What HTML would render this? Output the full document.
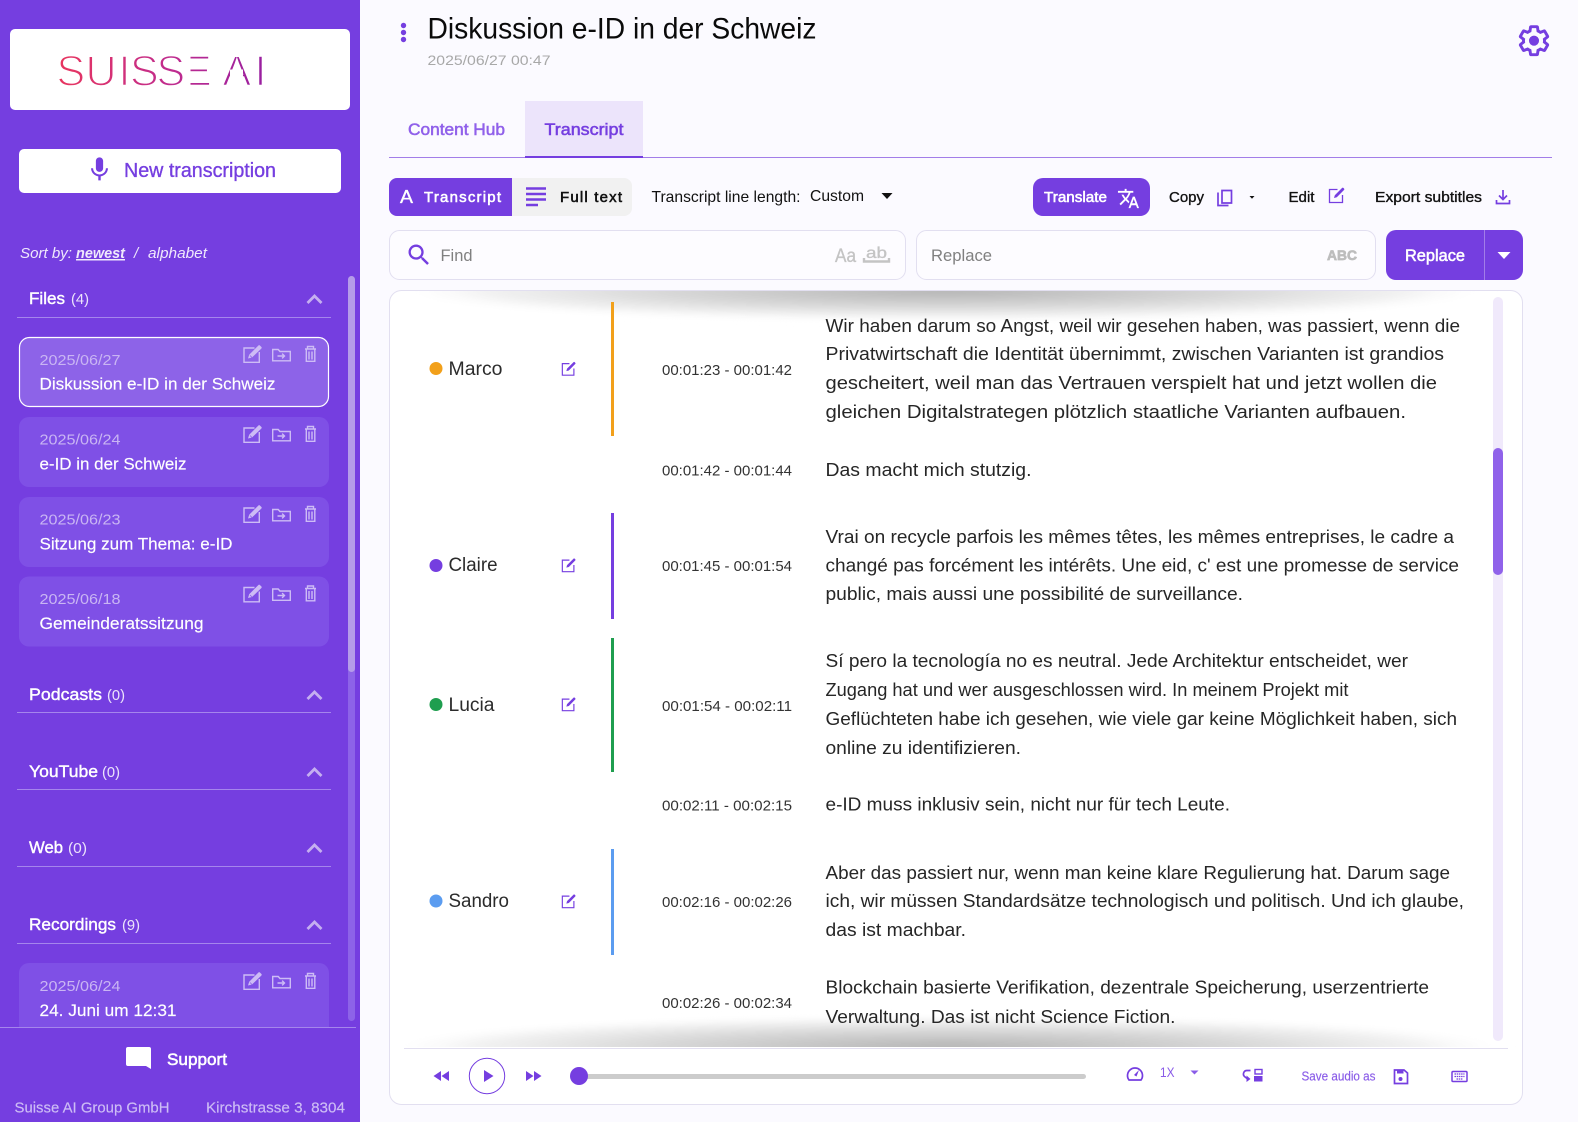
<!DOCTYPE html>
<html lang="en"><head><meta charset="utf-8"><title>Suisse AI – Transcript</title>
<style>
html,body{margin:0;padding:0;background:#fbfaff;overflow:hidden}
svg{display:block}
text{font-family:"Liberation Sans",sans-serif;white-space:pre}
.m{stroke-width:.35px;paint-order:stroke}
.w{fill:#fff}.wm{fill:#fff;stroke:#fff}
.p{fill:#753ee0}.pm{fill:#753ee0;stroke:#753ee0}
.k{fill:#111}.km{fill:#111;stroke:#111}
.h{stroke-width:.55px;paint-order:stroke}
.b{font-size:18px;fill:#262626}
.t{font-size:15px;fill:#333}
.n{font-size:19px;fill:#2b2b2b}
.sh{font-size:17px;fill:#fff;stroke:#fff;stroke-width:.4px}
.sc{font-size:15px;fill:#efe8fc}
.d{font-size:14.5px;fill:#c9b5f3}
.c{font-size:17px;fill:#fff;stroke:#fff;stroke-width:.15px}
.i{fill:none;stroke:#cdbcf5;stroke-width:1.4}
.ip{fill:none;stroke:#753ee0;stroke-width:1.7}
.ie{fill:none;stroke:#753ee0;stroke-width:1.3}
.ch{fill:none;stroke:#c5aff0;stroke-width:2.8}
</style></head>
<body>
<svg xmlns="http://www.w3.org/2000/svg" width="1578" height="1122" viewBox="0 0 1578 1122">
<defs>
<linearGradient id="lg" gradientUnits="userSpaceOnUse" x1="59" x2="262" y1="0" y2="0"><stop offset="0" stop-color="#e8355f"/><stop offset=".55" stop-color="#c02c8e"/><stop offset="1" stop-color="#9a1f9f"/></linearGradient>
<radialGradient id="sg"><stop offset="0" stop-color="#b4b4b4"/><stop offset=".5" stop-color="#d6d6d6"/><stop offset=".85" stop-color="#f3f3f3"/><stop offset="1" stop-color="#fff" stop-opacity="0"/></radialGradient>
<filter id="sb" x="-5%" y="-40%" width="110%" height="180%"><feGaussianBlur stdDeviation="3.500"/></filter>
<clipPath id="ct"><rect x="390" y="291" width="1132" height="40"/></clipPath>
<clipPath id="cb"><rect x="390" y="1000" width="1132" height="47"/></clipPath>
<symbol id="ci" viewBox="0 0 76 18" overflow="visible">
<path class="i" d="M11.500 3H1v14.300h15.300V7"/><path d="M5 13.500l1.200-3.800L15.300.6a1.200 1.200 0 0 1 1.700 0l1.300 1.300a1.200 1.200 0 0 1 0 1.700L9 12.500z" fill="#cdbcf5"/><path d="M7 10.500l2 2" stroke="#8d63e8" stroke-width=".8"/>
<path class="i" d="M29.700 15.800V4.500h5.500l1.800 2h10.300v9.300z"/><path class="i" d="M34.500 11h7m-2.400-2.400l2.400 2.400-2.400 2.400" stroke-width="1.100"/>
<path class="i" d="M62 4h11M64.500 3.500V1.500h6v2M63.300 4.500v11.800h8.500V4.500M66 6.500v8M69 6.500v8"/>
</symbol>
<symbol id="ed" viewBox="0 0 18 18" overflow="visible">
<path class="ie" d="M9.500 3.500H1.500v13h13V9"/><path d="M6 12l.8-2.800L14 2a1 1 0 0 1 1.500 0l.5.500a1 1 0 0 1 0 1.500L8.800 11.200z" fill="#753ee0"/>
</symbol>
</defs>

<rect width="1578" height="1122" fill="#fbfaff"/>

<!-- Sidebar -->
<rect width="360" height="1122" fill="#753ee0"/>
<rect x="10" y="29" width="340" height="81" rx="5" fill="#fff"/>
<text y="85.500" font-size="43" fill="url(#lg)" stroke="#fff" stroke-width="1.500" paint-order="fill stroke"><tspan x="56.500">S</tspan><tspan x="85.500">U</tspan><tspan x="118.500">I</tspan><tspan x="130">S</tspan><tspan x="156.500">S</tspan><tspan x="183">E</tspan><tspan x="222.500">A</tspan><tspan x="254.500">I</tspan></text>
<rect x="183" y="54" width="7.500" height="33" fill="#fff"/>
<rect x="230" y="69.500" width="13" height="9" fill="#fff"/>
<rect x="19" y="149" width="322" height="44" rx="5" fill="#fff"/>
<svg x="85" y="155" width="29" height="29" viewBox="0 0 24 24"><path fill="#753ee0" d="M12 14c1.660 0 2.990-1.340 2.990-3L15 5c0-1.660-1.340-3-3-3S9 3.340 9 5v6c0 1.660 1.340 3 3 3zm5.300-3c0 3-2.540 5.100-5.300 5.100S6.700 14 6.700 11H5c0 3.410 2.720 6.230 6 6.720V21h2v-3.280c3.280-.48 6-3.300 6-6.720h-1.700z"/></svg>
<text x="124" y="177" font-size="20" class="pm m" textLength="152" lengthAdjust="spacingAndGlyphs">New transcription</text>
<text x="20" y="258" class="sc" font-style="italic" textLength="52" lengthAdjust="spacingAndGlyphs">Sort by:</text>
<text x="76" y="258" class="sc" font-style="italic" font-weight="700" textLength="49" lengthAdjust="spacingAndGlyphs" text-decoration="underline">newest</text>
<text x="134" y="258" class="sc" font-style="italic">/</text>
<text x="148" y="258" class="sc" font-style="italic" textLength="59" lengthAdjust="spacingAndGlyphs">alphabet</text>

<rect x="348" y="276" width="7" height="745" rx="3.500" fill="#8d63e8"/>
<rect x="348" y="276" width="7" height="396" rx="3.500" fill="#b59ce9"/>

<text x="29" y="304" class="sh" textLength="36" lengthAdjust="spacingAndGlyphs">Files</text><text x="71" y="304" font-size="15" fill="#ece4fb" textLength="18" lengthAdjust="spacingAndGlyphs">(4)</text>
<path d="M307.500 303l7-7 7 7" class="ch"/>
<rect x="17" y="317" width="314" height="1" fill="#a585ec"/>

<rect x="19.500" y="337.500" width="309" height="69" rx="10" fill="#8d63e8" stroke="#fff" stroke-width="1.200"/>
<text x="39.500" y="365" class="d" textLength="81" lengthAdjust="spacingAndGlyphs">2025/06/27</text>
<text x="39.500" y="389.500" class="c" textLength="236" lengthAdjust="spacingAndGlyphs">Diskussion e-ID in der Schweiz</text>
<use href="#ci" x="243" y="345" width="76" height="18"/>

<rect x="19" y="417" width="310" height="70" rx="10" fill="#7f50e6"/>
<text x="39.500" y="444.500" class="d" textLength="81" lengthAdjust="spacingAndGlyphs">2025/06/24</text>
<text x="39.500" y="469.500" class="c" textLength="147" lengthAdjust="spacingAndGlyphs">e-ID in der Schweiz</text>
<use href="#ci" x="243" y="425" width="76" height="18"/>

<rect x="19" y="497" width="310" height="70" rx="10" fill="#7f50e6"/>
<text x="39.500" y="524.500" class="d" textLength="81" lengthAdjust="spacingAndGlyphs">2025/06/23</text>
<text x="39.500" y="549.500" class="c" textLength="193" lengthAdjust="spacingAndGlyphs">Sitzung zum Thema: e-ID</text>
<use href="#ci" x="243" y="505" width="76" height="18"/>

<rect x="19" y="576.500" width="310" height="70" rx="10" fill="#7f50e6"/>
<text x="39.500" y="604" class="d" textLength="81" lengthAdjust="spacingAndGlyphs">2025/06/18</text>
<text x="39.500" y="629" class="c" textLength="164" lengthAdjust="spacingAndGlyphs">Gemeinderatssitzung</text>
<use href="#ci" x="243" y="584.500" width="76" height="18"/>

<text x="29" y="700" class="sh" textLength="73" lengthAdjust="spacingAndGlyphs">Podcasts</text><text x="107" y="700" font-size="15" fill="#ece4fb" textLength="18" lengthAdjust="spacingAndGlyphs">(0)</text>
<path d="M307.500 699l7-7 7 7" class="ch"/>
<rect x="17" y="712" width="314" height="1" fill="#a585ec"/>

<text x="29" y="777" class="sh" textLength="69" lengthAdjust="spacingAndGlyphs">YouTube</text><text x="102" y="777" font-size="15" fill="#ece4fb" textLength="18" lengthAdjust="spacingAndGlyphs">(0)</text>
<path d="M307.500 776l7-7 7 7" class="ch"/>
<rect x="17" y="789" width="314" height="1" fill="#a585ec"/>

<text x="29" y="853" class="sh" textLength="34" lengthAdjust="spacingAndGlyphs">Web</text><text x="68" y="853" font-size="15" fill="#ece4fb" textLength="19" lengthAdjust="spacingAndGlyphs">(0)</text>
<path d="M307.500 852l7-7 7 7" class="ch"/>
<rect x="17" y="866" width="314" height="1" fill="#a585ec"/>

<text x="29" y="930" class="sh" textLength="87" lengthAdjust="spacingAndGlyphs">Recordings</text><text x="122" y="930" font-size="15" fill="#ece4fb" textLength="18" lengthAdjust="spacingAndGlyphs">(9)</text>
<path d="M307.500 929l7-7 7 7" class="ch"/>
<rect x="17" y="943" width="314" height="1" fill="#a585ec"/>

<rect x="19" y="963" width="310" height="80" rx="10" fill="#7f50e6"/>
<text x="39.500" y="991" class="d" textLength="81" lengthAdjust="spacingAndGlyphs">2025/06/24</text>
<text x="39.500" y="1016" class="c" textLength="137" lengthAdjust="spacingAndGlyphs">24. Juni um 12:31</text>
<use href="#ci" x="243" y="972" width="76" height="18"/>

<rect x="0" y="1027" width="360" height="95" fill="#753ee0"/>
<rect x="0" y="1027" width="356" height="1" fill="#a585ec"/>
<path d="M128 1047h21a2 2 0 0 1 2 2v20l-5-3h-18a2 2 0 0 1-2-2v-15a2 2 0 0 1 2-2z" fill="#fff"/>
<text x="167" y="1065" font-size="17" class="wm h" textLength="60" lengthAdjust="spacingAndGlyphs">Support</text>
<text x="14.500" y="1112.500" font-size="14.500" fill="#cdbcf5" stroke="#cdbcf5" stroke-width=".15" textLength="155" lengthAdjust="spacingAndGlyphs">Suisse AI Group GmbH</text>
<text x="206" y="1112.500" font-size="14.500" fill="#cdbcf5" stroke="#cdbcf5" stroke-width=".15" textLength="139" lengthAdjust="spacingAndGlyphs">Kirchstrasse 3, 8304</text>

<!-- Header -->
<circle cx="403.500" cy="25.500" r="2.700" fill="#753ee0"/><circle cx="403.500" cy="32.500" r="2.700" fill="#753ee0"/><circle cx="403.500" cy="39.500" r="2.700" fill="#753ee0"/>
<text x="427.500" y="38.500" font-size="30" fill="#0a0a0a" textLength="389" lengthAdjust="spacingAndGlyphs">Diskussion e-ID in der Schweiz</text>
<text x="427.500" y="65" font-size="14" fill="#a8a8a8" textLength="123" lengthAdjust="spacingAndGlyphs">2025/06/27 00:47</text>
<g transform="translate(1517.200,23.900) scale(1.400)"><path fill="none" stroke="#753ee0" stroke-width="2.100" stroke-linejoin="miter" d="M19.430 12.980c.04-.32.07-.64.07-.98s-.03-.66-.07-.98l2.110-1.650c.19-.15.24-.42.120-.64l-2-3.460c-.12-.22-.39-.3-.61-.22l-2.490 1c-.52-.4-1.080-.73-1.690-.98l-.38-2.650C14.460 2.180 14.250 2 14 2h-4c-.25 0-.46.18-.49.42l-.38 2.650c-.61.25-1.170.59-1.690.98l-2.490-1c-.23-.09-.49 0-.61.22l-2 3.460c-.13.22-.07.49.12.64l2.110 1.650c-.04.32-.07.65-.07.98s.03.66.07.98l-2.110 1.650c-.19.15-.24.42-.12.64l2 3.460c.12.22.39.3.61.22l2.490-1c.52.4 1.080.73 1.690.98l.38 2.650c.03.24.24.42.49.42h4c.25 0 .46-.18.49-.42l.38-2.650c.61-.25 1.170-.59 1.690-.98l2.490 1c.23.09.49 0 .61-.22l2-3.460c.12-.22.07-.49-.12-.64l-2.110-1.650z"/><circle cx="12" cy="12" r="3.600" fill="#753ee0"/></g>

<!-- Tabs -->
<rect x="525" y="101" width="118" height="56" fill="#ece4fb"/>
<rect x="389" y="157" width="1163" height="1" fill="#a27de8"/>
<rect x="525" y="156" width="118" height="2" fill="#753ee0"/>
<text x="408" y="135" font-size="17" fill="#9060ea" stroke="#9060ea" class="h" textLength="97" lengthAdjust="spacingAndGlyphs">Content Hub</text>
<text x="544.500" y="135" font-size="17" class="pm h" textLength="79" lengthAdjust="spacingAndGlyphs">Transcript</text>

<!-- Toolbar -->
<path d="M397 178h115v38H397a8 8 0 0 1-8-8v-22a8 8 0 0 1 8-8z" fill="#753ee0"/>
<path d="M512 178h112a8 8 0 0 1 8 8v22a8 8 0 0 1-8 8H512z" fill="#f1f1f1"/>
<text x="400" y="203" font-size="18" class="wm m" textLength="13" lengthAdjust="spacingAndGlyphs">A</text>
<text x="424" y="202" font-size="15" class="wm h" letter-spacing="1" textLength="78" lengthAdjust="spacing">Transcript</text>
<path d="M526 188.500h20M526 194h20M526 199.500h20M526 205h12" stroke="#753ee0" stroke-width="2.400" fill="none"/>
<text x="560" y="202" font-size="15" class="km h" textLength="62" lengthAdjust="spacing">Full text</text>
<text x="651.500" y="202" font-size="16" fill="#111" textLength="149" lengthAdjust="spacingAndGlyphs">Transcript line length:</text>
<text x="810" y="201" font-size="16" fill="#111" textLength="54" lengthAdjust="spacingAndGlyphs">Custom</text>
<path d="M881.500 193h11l-5.500 6z" fill="#111"/>

<rect x="1033" y="178" width="117" height="38" rx="10" fill="#753ee0"/>
<text x="1044" y="202" font-size="15" class="wm h" textLength="63" lengthAdjust="spacingAndGlyphs">Translate</text>
<svg x="1117" y="187" width="23" height="23" viewBox="0 0 24 24"><path fill="#fff" d="M12.870 15.070l-2.540-2.510.03-.03c1.740-1.940 2.980-4.170 3.710-6.530H17V4h-7V2H8v2H1v1.990h11.170C11.500 7.920 10.440 9.750 9 11.350 8.070 10.320 7.300 9.190 6.690 8h-2c.73 1.630 1.730 3.170 2.980 4.560l-5.090 5.020L4 19l5-5 3.110 3.110.76-2.040zM18.500 10h-2L12 22h2l1.120-3h4.750L21 22h2l-4.500-12zm-2.620 7l1.620-4.330L19.120 17h-3.240z"/></svg>
<text x="1169" y="202" font-size="15" class="km m" textLength="35" lengthAdjust="spacingAndGlyphs">Copy</text>
<path class="ip" d="M1222 190.500h9.500v12.500H1222zM1218 192.500v13h10.500"/>
<path d="M1249.500 196h5l-2.500 2.800z" fill="#111"/>
<text x="1288.500" y="202" font-size="15" class="km m" textLength="26" lengthAdjust="spacingAndGlyphs">Edit</text>
<use href="#ed" x="1328" y="186" width="18" height="18"/>
<text x="1375" y="202" font-size="15" class="km m" textLength="107" lengthAdjust="spacingAndGlyphs">Export subtitles</text>
<path class="ip" d="M1503 190v9.500m-4-4l4 4 4-4M1496.500 200v3.500h13V200"/>

<!-- Find / replace -->
<rect x="389.500" y="230.500" width="516" height="49" rx="10" fill="#fdfcff" stroke="#e2dff0"/>
<svg x="405" y="241" width="28" height="28" viewBox="0 0 24 24"><path fill="#753ee0" d="M15.500 14h-.79l-.28-.27C15.410 12.590 16 11.110 16 9.500 16 5.910 13.090 3 9.500 3S3 5.910 3 9.500 5.910 16 9.500 16c1.610 0 3.090-.59 4.230-1.570l.27.28v.79l5 4.990L20.490 19l-4.990-5zm-6 0C7.010 14 5 11.990 5 9.500S7.010 5 9.500 5 14 7.010 14 9.500 11.990 14 9.500 14z"/></svg>
<text x="440.500" y="261" font-size="17" fill="#808080" textLength="32" lengthAdjust="spacingAndGlyphs">Find</text>
<text x="835" y="262" font-size="19" fill="#c4c4c4" stroke="#c4c4c4" class="m" textLength="21" lengthAdjust="spacingAndGlyphs">Aa</text>
<text x="866" y="258" font-size="16" fill="#c4c4c4" stroke="#c4c4c4" class="m" textLength="21" lengthAdjust="spacingAndGlyphs">ab</text>
<path d="M864 258v3.500h25V258" fill="none" stroke="#c4c4c4" stroke-width="2.400"/>

<rect x="916.500" y="230.500" width="459" height="49" rx="10" fill="#fdfcff" stroke="#e2dff0"/>
<text x="931" y="261" font-size="17" fill="#808080" textLength="61" lengthAdjust="spacingAndGlyphs">Replace</text>
<text x="1327" y="260" font-size="14" font-weight="700" fill="#bdbdbd" stroke="#bdbdbd" stroke-width=".7" textLength="30" lengthAdjust="spacingAndGlyphs">ABC</text>
<rect x="1386" y="230" width="137" height="50" rx="10" fill="#753ee0"/>
<rect x="1484" y="230" width="1" height="50" fill="#a27de8"/>
<text x="1405" y="261" font-size="17" class="wm h" textLength="60" lengthAdjust="spacingAndGlyphs">Replace</text>
<path d="M1497.500 252h13l-6.500 7z" fill="#fff"/>

<!-- Transcript card -->
<rect x="389.500" y="290.500" width="1133" height="814" rx="12" fill="#fff" stroke="#e2dff0"/>
<g clip-path="url(#ct)"><ellipse cx="945" cy="291" rx="550" ry="30" fill="url(#sg)" filter="url(#sb)"/></g>
<g clip-path="url(#cb)"><ellipse cx="948" cy="1047" rx="565" ry="31" fill="url(#sg)" filter="url(#sb)"/></g>
<rect x="1493" y="297" width="10" height="744" rx="5" fill="#f0e9fb"/>
<rect x="1493" y="448" width="10" height="127" rx="5" fill="#9062ea"/>

<!-- Marco -->
<circle cx="436" cy="368.500" r="6.500" fill="#f2a01a"/>
<text x="448.500" y="375" class="n" textLength="54" lengthAdjust="spacingAndGlyphs">Marco</text>
<use href="#ed" x="561" y="360.500" width="16" height="16"/>
<rect x="611" y="302" width="3" height="134" fill="#f2a01a"/>
<text x="662" y="375" class="t" textLength="130" lengthAdjust="spacingAndGlyphs">00:01:23 - 00:01:42</text>
<text x="825.500" y="332" class="b" textLength="634.500" lengthAdjust="spacingAndGlyphs">Wir haben darum so Angst, weil wir gesehen haben, was passiert, wenn die</text>
<text x="825.500" y="360" class="b" textLength="618.500" lengthAdjust="spacingAndGlyphs">Privatwirtschaft die Identität übernimmt, zwischen Varianten ist grandios</text>
<text x="825.500" y="389" class="b" textLength="611.500" lengthAdjust="spacingAndGlyphs">gescheitert, weil man das Vertrauen verspielt hat und jetzt wollen die</text>
<text x="825.500" y="418" class="b" textLength="580.500" lengthAdjust="spacingAndGlyphs">gleichen Digitalstrategen plötzlich staatliche Varianten aufbauen.</text>
<text x="662" y="475.500" class="t" textLength="130" lengthAdjust="spacingAndGlyphs">00:01:42 - 00:01:44</text>
<text x="825.500" y="476" class="b" textLength="206" lengthAdjust="spacingAndGlyphs">Das macht mich stutzig.</text>

<!-- Claire -->
<circle cx="436" cy="565.500" r="6.500" fill="#753ee0"/>
<text x="448.500" y="571" class="n" textLength="49" lengthAdjust="spacingAndGlyphs">Claire</text>
<use href="#ed" x="561" y="557" width="16" height="16"/>
<rect x="611" y="513" width="3" height="106" fill="#753ee0"/>
<text x="662" y="571" class="t" textLength="130" lengthAdjust="spacingAndGlyphs">00:01:45 - 00:01:54</text>
<text x="825.500" y="543" class="b" textLength="628.500" lengthAdjust="spacingAndGlyphs">Vrai on recycle parfois les mêmes têtes, les mêmes entreprises, le cadre a</text>
<text x="825.500" y="571.500" class="b" textLength="633.500" lengthAdjust="spacingAndGlyphs">changé pas forcément les intérêts. Une eid, c' est une promesse de service</text>
<text x="825.500" y="600" class="b" textLength="417.500" lengthAdjust="spacingAndGlyphs">public, mais aussi une possibilité de surveillance.</text>

<!-- Lucia -->
<circle cx="436" cy="704.500" r="6.500" fill="#1f9e4f"/>
<text x="448.500" y="711" class="n" textLength="46" lengthAdjust="spacingAndGlyphs">Lucia</text>
<use href="#ed" x="561" y="696" width="16" height="16"/>
<rect x="611" y="638" width="3" height="134" fill="#1f9e4f"/>
<text x="662" y="711" class="t" textLength="130" lengthAdjust="spacingAndGlyphs">00:01:54 - 00:02:11</text>
<text x="825.500" y="667" class="b" textLength="582.500" lengthAdjust="spacingAndGlyphs">Sí pero la tecnología no es neutral. Jede Architektur entscheidet, wer</text>
<text x="825.500" y="696" class="b" textLength="523" lengthAdjust="spacingAndGlyphs">Zugang hat und wer ausgeschlossen wird. In meinem Projekt mit</text>
<text x="825.500" y="725" class="b" textLength="631.500" lengthAdjust="spacingAndGlyphs">Geflüchteten habe ich gesehen, wie viele gar keine Möglichkeit haben, sich</text>
<text x="825.500" y="754" class="b" textLength="195.500" lengthAdjust="spacingAndGlyphs">online zu identifizieren.</text>
<text x="662" y="810.500" class="t" textLength="130" lengthAdjust="spacingAndGlyphs">00:02:11 - 00:02:15</text>
<text x="825.500" y="810.500" class="b" textLength="404.500" lengthAdjust="spacingAndGlyphs">e-ID muss inklusiv sein, nicht nur für tech Leute.</text>

<!-- Sandro -->
<circle cx="436" cy="901" r="6.500" fill="#5b9cf0"/>
<text x="448.500" y="907" class="n" textLength="60.500" lengthAdjust="spacingAndGlyphs">Sandro</text>
<use href="#ed" x="561" y="893" width="16" height="16"/>
<rect x="611" y="849" width="3" height="106" fill="#5b9cf0"/>
<text x="662" y="907" class="t" textLength="130" lengthAdjust="spacingAndGlyphs">00:02:16 - 00:02:26</text>
<text x="825.500" y="879" class="b" textLength="624.500" lengthAdjust="spacingAndGlyphs">Aber das passiert nur, wenn man keine klare Regulierung hat. Darum sage</text>
<text x="825.500" y="907" class="b" textLength="638.500" lengthAdjust="spacingAndGlyphs">ich, wir müssen Standardsätze technologisch und politisch. Und ich glaube,</text>
<text x="825.500" y="936" class="b" textLength="140.500" lengthAdjust="spacingAndGlyphs">das ist machbar.</text>
<text x="662" y="1008" class="t" textLength="130" lengthAdjust="spacingAndGlyphs">00:02:26 - 00:02:34</text>
<text x="825.500" y="993.500" class="b" textLength="603.500" lengthAdjust="spacingAndGlyphs">Blockchain basierte Verifikation, dezentrale Speicherung, userzentrierte</text>
<text x="825.500" y="1023" class="b" textLength="350" lengthAdjust="spacingAndGlyphs">Verwaltung. Das ist nicht Science Fiction.</text>

<!-- Player -->
<rect x="404" y="1048" width="1104" height="1" fill="#e2dff0"/>
<path d="M441 1071v10l-7.500-5zM449 1071v10l-7.500-5z" fill="#753ee0"/>
<circle cx="487" cy="1076" r="17.700" fill="#fff" stroke="#753ee0" stroke-width="1"/>
<path d="M484 1070v12l9.500-6z" fill="#753ee0"/>
<path d="M526 1071v10l7.500-5zM534 1071v10l7.500-5z" fill="#753ee0"/>
<rect x="579" y="1074" width="507" height="5" rx="2.500" fill="#cccccc"/>
<circle cx="579" cy="1076" r="9" fill="#753ee0"/>
<path class="ip" d="M1129 1080h12a7.500 7.500 0 1 0-12 0z"/><path d="M1134 1075l5-5-2.500 6.500z" fill="#753ee0"/>
<text x="1160" y="1077" font-size="13.500" fill="#8a5ce8" textLength="14.500" lengthAdjust="spacingAndGlyphs">1X</text>
<path d="M1190.500 1070.500h8l-4 4z" fill="#8a5ce8"/>
<path class="ip" d="M1250.500 1070.500h-3.500a3.500 3.500 0 0 0-2.500 6l2.500 2"/><path d="M1246.500 1075.500v6.500l4-3z" fill="#753ee0"/>
<rect x="1255" y="1069.500" width="7" height="4.500" fill="none" stroke="#753ee0" stroke-width="1.400"/><rect x="1254" y="1076" width="8.500" height="5.500" fill="#753ee0"/>
<text x="1301.500" y="1080.500" font-size="12.500" fill="#8a5ce8" stroke="#8a5ce8" stroke-width=".15" textLength="74" lengthAdjust="spacingAndGlyphs">Save audio as</text>
<path class="ip" d="M1394.500 1070h9.500l3.500 3v10.500h-13z"/><rect x="1397" y="1070" width="6.500" height="3.500" fill="#753ee0"/><circle cx="1400.500" cy="1079" r="2" fill="#753ee0"/>
<rect x="1452" y="1071.500" width="15" height="10" rx="1" fill="none" stroke="#753ee0" stroke-width="1.500"/>
<path d="M1454.500 1074h10M1454.500 1076.500h10M1456.500 1079h6" stroke="#753ee0" stroke-width="1.300" stroke-dasharray="1.500 .7" fill="none"/>
</svg>
</body></html>
